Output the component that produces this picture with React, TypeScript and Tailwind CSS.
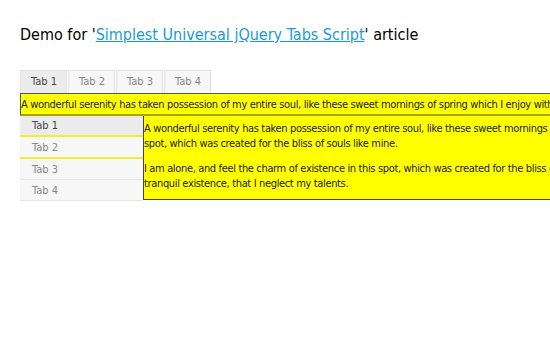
import React from 'react';

export default function App() {
  const tabs = ['Tab 1', 'Tab 2', 'Tab 3', 'Tab 4'];

  return (
    <div className="w-[550px] h-[343px] overflow-hidden bg-white text-[#222] font-['DejaVu_Sans_Condensed','DejaVu_Sans',sans-serif]">
      <div className="pl-5">
        <h1 className="pt-[25px] text-[16px] leading-[20px] text-black">
          Demo for '<a href="#" className="text-[#1a9ad6] underline">Simplest Universal jQuery Tabs Script</a>' article
        </h1>

        {/* horizontal tabs */}
        <div className="mt-[25px] flex gap-[1px] text-[11px]">
          {tabs.map((t, i) => (
            <div
              key={i}
              className={`h-[23px] w-[47px] border border-b-0 border-[#e2e2e2] pl-[10px] leading-[21px] ${
                i === 0 ? 'bg-[#ececec] text-[#444]' : 'bg-[#f7f7f7] text-[#888]'
              }`}
            >
              {t}
            </div>
          ))}
        </div>

        <div className="w-[700px] h-[23px] whitespace-nowrap border-l border-t border-[#555] border-b-2 border-b-[#a6a600] bg-[#ffff00] text-[11px] leading-[21px] tracking-[-0.35px] text-[#222]">
          A wonderful serenity has taken possession of my entire soul, like these sweet mornings of spring which I enjoy with my whole heart.
        </div>

        <div className="flex">
          {/* vertical tabs */}
          <div className="w-[123px] shrink-0 border-b border-[#e6e6e6] text-[11px]">
            <div className="h-[21px] border-b-2 border-[#f4ee30] bg-[#ececec] pl-3 leading-[20px] text-[#444]">Tab 1</div>
            <div className="h-[22px] border-b-2 border-[#f4ee30] bg-[#f7f7f7] pl-3 leading-[21px] text-[#888]">Tab 2</div>
            <div className="h-[21px] border-b border-[#e6e6e6] bg-[#f7f7f7] pl-3 leading-[21px] text-[#888]">Tab 3</div>
            <div className="h-[20px] bg-[#f7f7f7] pl-3 leading-[21px] text-[#888]">Tab 4</div>
          </div>

          {/* content */}
          <div className="w-[700px] shrink-0 h-[84px] whitespace-nowrap border-l border-b border-[#444] bg-[#ffff00] pt-[5px] text-[11px] leading-[15px] tracking-[-0.35px] text-[#222]">
            <p>
              A wonderful serenity has taken possession of my entire soul, like these sweet mornings of spring which I enjoy with my whole heart.
              <br />
              spot, which was created for the bliss of souls like mine.
            </p>
            <p className="mt-[10px]">
              I am alone, and feel the charm of existence in this spot, which was created for the bliss of souls like mine.
              <br />
              tranquil existence, that I neglect my talents.
            </p>
          </div>
        </div>
      </div>
    </div>
  );
}
